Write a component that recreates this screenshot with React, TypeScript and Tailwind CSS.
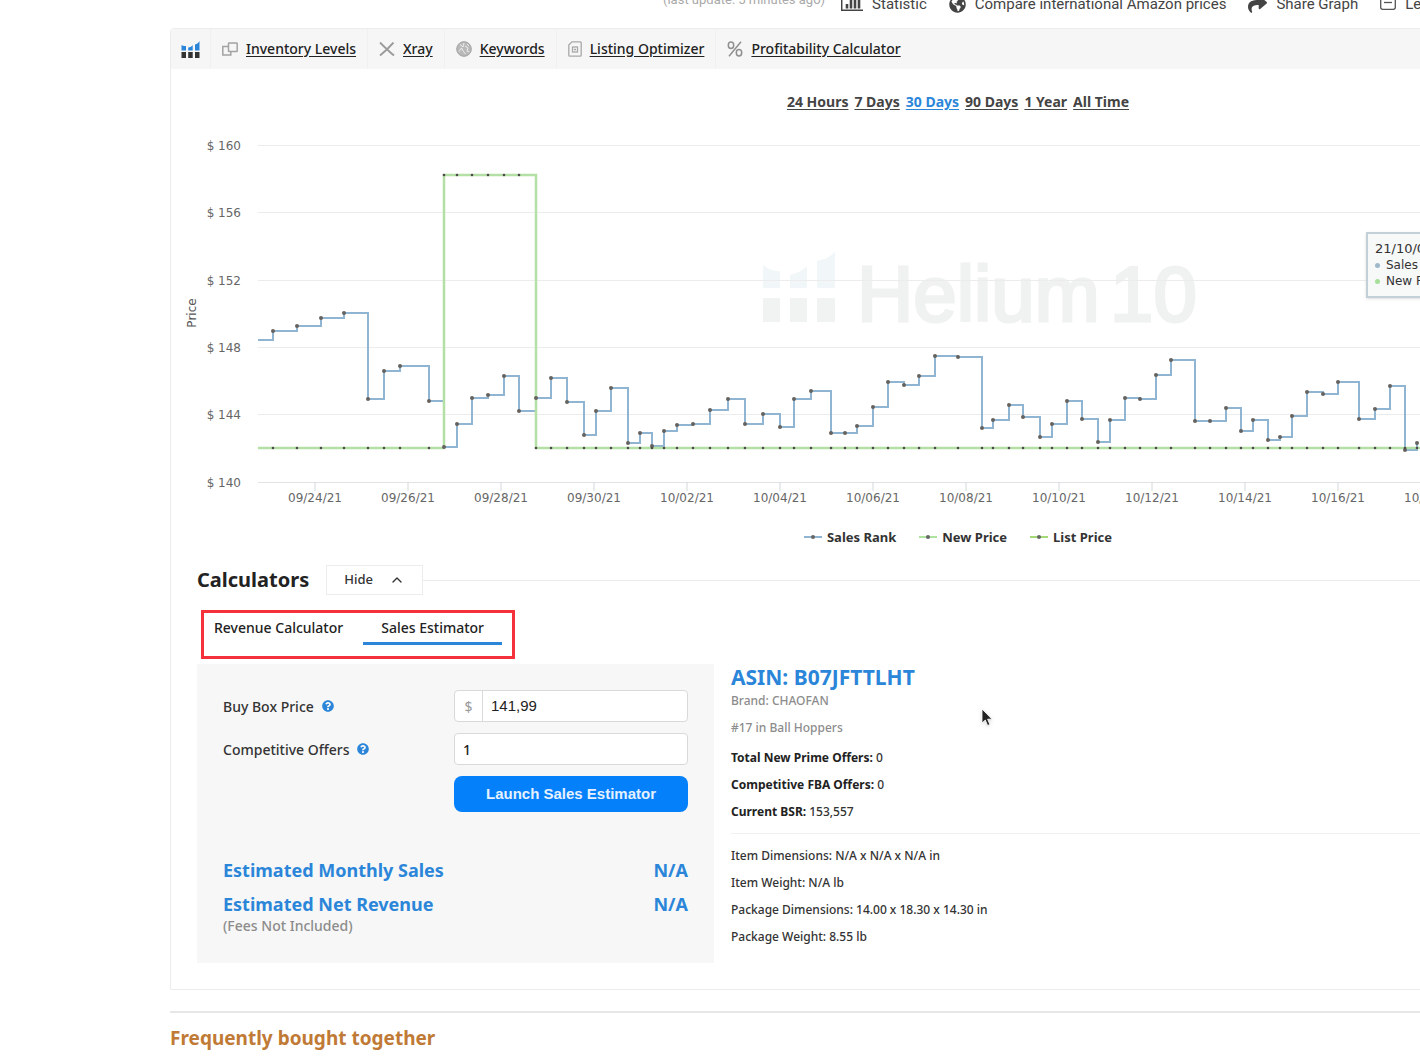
import type { ReactNode } from "react";
import { ChevronUp } from "lucide-react";
import { FaShare, FaGlobeAmericas, FaQuestionCircle } from "react-icons/fa";

type Point = [number, number];

const salesRank: Point[] = [
  [258, 340], [273, 331], [297, 326], [321, 318], [344, 313], [368, 399], [384, 371], [400, 366],
  [429, 401], [444, 447], [457, 424], [472, 398], [488, 395], [504, 376], [519, 411], [536, 398],
  [551, 378], [567, 402], [584, 435], [596, 411], [611, 388], [628, 443], [640, 433], [652, 446],
  [664, 431], [677, 425], [693, 424], [710, 410], [728, 399], [745, 424], [763, 414], [780, 427],
  [794, 399], [811, 391], [831, 433], [845, 433], [857, 426], [873, 407], [888, 382], [904, 385],
  [919, 376], [935, 356], [958, 357], [982, 428], [993, 420], [1009, 405], [1023, 417], [1040, 437],
  [1052, 424], [1067, 401], [1082, 419], [1098, 442], [1110, 420], [1125, 398], [1140, 399],
  [1156, 375], [1171, 360], [1195, 421], [1210, 421], [1226, 408], [1241, 431], [1253, 420],
  [1268, 440], [1280, 437], [1292, 416], [1307, 392], [1323, 394], [1338, 382], [1359, 419],
  [1375, 409], [1390, 386], [1405, 450], [1417, 443],
];

const gridLines = [
  { y: 145, label: "$ 160" },
  { y: 212, label: "$ 156" },
  { y: 280, label: "$ 152" },
  { y: 347, label: "$ 148" },
  { y: 414, label: "$ 144" },
  { y: 482, label: "$ 140" },
];

const dates = [
  "09/24/21", "09/26/21", "09/28/21", "09/30/21", "10/02/21", "10/04/21", "10/06/21",
  "10/08/21", "10/10/21", "10/12/21", "10/14/21", "10/16/21", "10/18/21",
];

const PEAK_START = 444;
const PEAK_END = 536;
const NEW_PRICE_Y = 448;
const NEW_PRICE_PEAK_Y = 175;

function stepPath(points: Point[]) {
  return points.map(([x, y], i) => (i === 0 ? `M${x} ${y}` : `H${x}V${y}`)).join("");
}

function newPriceY(x: number) {
  return x >= PEAK_START && x < PEAK_END ? NEW_PRICE_PEAK_Y : NEW_PRICE_Y;
}

function HeliumMark({ top, bottom, className }: { top: string; bottom: string; className?: string }) {
  return (
    <svg viewBox="0 0 18 17" className={className} aria-hidden="true">
      <path fill={top} d="M0 4c1.200.9 2.800 1.100 4.500 1v4.500H0zM6.700 6.500c2-.2 3.500-1 4.500-2.500v5.500H6.700zM13.500 3.500C15.500 3 17 2 18 0v9.500h-4.500z" />
      <path fill={bottom} d="M0 11h4.500v6H0zM6.700 11h4.500v6H6.700zM13.500 11H18v6h-4.500z" />
    </svg>
  );
}

function WindowsIcon() {
  return (
    <svg viewBox="0 0 16 14" className="h-3.5 w-4" fill="none" stroke="#a3a3a3" strokeWidth="1.500" aria-hidden="true">
      <path d="M6.500 4.500H.8v8.500h8v-3" />
      <rect x="6.500" y="1" width="8.700" height="8.500" rx=".6" />
    </svg>
  );
}

function CrossIcon() {
  return (
    <svg viewBox="0 0 16 14" className="h-3.5 w-4" fill="none" stroke="#9b9b9b" strokeWidth="1.900" aria-hidden="true">
      <path d="M1 .5c4 4 9 9 14 13M14.500.5C10.500 5 6 9.500 1 13.500" />
    </svg>
  );
}

function KeywordsIcon() {
  return (
    <svg viewBox="0 0 16 16" className="size-4" fill="none" aria-hidden="true">
      <circle cx="8" cy="8" r="7.500" fill="#b9b9b9" />
      <path d="M3 10.500 5.500 7l2 3.500L9.500 13M4 3.500l3 2.500 1-4M9 5l3 2-1 3 2.500 1M11 3l2 2" stroke="#f2f2f2" strokeWidth=".9" />
      <circle cx="8" cy="8" r="7.300" stroke="#a0a0a0" strokeWidth=".9" />
    </svg>
  );
}

function ListingIcon() {
  return (
    <svg viewBox="0 0 14 16" className="h-4 w-3.5" fill="none" stroke="#a8a8a8" strokeWidth="1.300" aria-hidden="true">
      <path d="M4 .8h8.200a1 1 0 0 1 1 1v12.400a1 1 0 0 1-1 1H1.800a1 1 0 0 1-1-1V4z" />
      <rect x="4.500" y="6" width="5" height="5" />
      <path d="M6 8.500h2" />
    </svg>
  );
}

function PercentIcon() {
  return (
    <svg viewBox="0 0 16 16" className="size-4" fill="none" stroke="#8f8f8f" strokeWidth="1.500" aria-hidden="true">
      <path d="M14 .8 2 15.200" />
      <ellipse cx="4" cy="4.300" rx="2.700" ry="3.200" />
      <ellipse cx="12" cy="11.700" rx="2.700" ry="3.200" />
    </svg>
  );
}

function StatisticIcon() {
  return (
    <svg viewBox="0 0 22 18" className="h-[18px] w-[22px]" fill="none" stroke="#444" aria-hidden="true">
      <path d="M.7 0v15.200H22" strokeWidth="1.500" />
      <path d="M6 9v4.500M10 4v9.500M14 2v11.500M18 1v12.500" strokeWidth="2.600" />
    </svg>
  );
}

function LegendToggleIcon() {
  return (
    <svg viewBox="0 0 16 16" className="size-4" fill="none" stroke="#555" strokeWidth="1.300" aria-hidden="true">
      <path d="M.7.7v10.600a2 2 0 0 0 2 2h10.600a2 2 0 0 0 2-2V.7z" />
      <path d="M4 6.500h8" />
    </svg>
  );
}

function TopAction({ icon, children }: { icon: ReactNode; children: ReactNode }) {
  return (
    <button type="button" className="flex shrink-0 items-center gap-[9px] whitespace-nowrap">
      {icon}
      {children}
    </button>
  );
}

function Tool({ icon, label }: { icon: ReactNode; label: string }) {
  return (
    <li className="flex items-center gap-2 border-l border-[#f0f0f0] px-[11px]">
      {icon}
      <a href="#" className="pb-0.5 text-[14px] font-medium text-[#222] underline underline-offset-2">{label}</a>
    </li>
  );
}

function PriceChart() {
  return (
    <div className="relative">
      <svg className="block h-[384px] w-full" role="img" aria-label="Price and sales rank, last 30 days">
        <g transform="translate(-171 -128)">
          <g fontFamily='"Liberation Sans", sans-serif' fontSize="78" fill="#f0f1f1" stroke="#f0f1f1" strokeWidth="3">
            <text x="857" y="321">Helium</text>
            <text x="1110" y="321">10</text>
          </g>
          <g fill="#f1f2f2">
            <path d="M763 298h17v24h-17zM790 298h17v24h-17zM817 298h18v24h-18z" />
            <path fill="#f1f6f8" d="M763 265c5 4 10 6 17 6v17h-17zM790 275c8-2 13-5 17-9v22h-17zM817 261c9-2 15-5 18-10v37h-18z" />
          </g>
          {gridLines.map(({ y, label }) => (
            <g key={label}>
              <path d={`M258 ${y}.5H1760`} stroke={y === 482 ? "#dfe3e3" : "#ececec"} strokeWidth="1" />
              <text x="241" y={y + 5} textAnchor="end" fontFamily='"DejaVu Sans", sans-serif' fontSize="12" fill="#666">{label}</text>
            </g>
          ))}
          {dates.map((date, i) => (
            <g key={date}>
              <path d={`M${315 + i * 93} 482v9`} stroke="#d4dada" />
              <text x={315 + i * 93} y="502" textAnchor="middle" fontFamily='"DejaVu Sans", sans-serif' fontSize="12" fill="#666">{date}</text>
            </g>
          ))}
          <text x="196" y="313" textAnchor="middle" transform="rotate(-90 196 313)" fontFamily='"DejaVu Sans", sans-serif' fontSize="12" fill="#555">Price</text>
          <path d={stepPath(salesRank)} fill="none" stroke="#8fb5d3" strokeWidth="2" />
          <path d="M258 448H444V175H536V448H1430" fill="none" stroke="#b2e0a5" strokeWidth="2.500" />
          {salesRank.slice(1).map(([x, y]) => (
            <g key={x} fill="#66635f">
              <circle cx={x} cy={y} r="2" />
              <circle cx={x} cy={newPriceY(x)} r="1.300" fill="#4f4a4a" />
            </g>
          ))}
        </g>
      </svg>
      <div className="absolute top-[104px] left-[1195px] w-44 border-2 border-[#c3d0d7] bg-[#f7f8f8]/95 p-[7px] font-['DejaVu_Sans',sans-serif] text-[12px] leading-4 whitespace-nowrap text-[#333] shadow">
        <p className="text-[13px]">21/10/04 08:00</p>
        <p className="flex items-center gap-1.5"><span className="size-[5px] rounded-full bg-[#9db8cb]" />Sales Rank: 153,557</p>
        <p className="flex items-center gap-1.5"><span className="size-[5px] rounded-full bg-[#a5df9a]" />New Price: $141.99</p>
      </div>
    </div>
  );
}

function LegendItem({ color, label }: { color: string; label: string }) {
  return (
    <li className="flex items-center gap-[5px]">
      <svg viewBox="0 0 18 6" className="h-1.5 w-[18px]" aria-hidden="true">
        <path d="M0 3h18" stroke={color} strokeWidth="2" />
        <circle cx="9" cy="3" r="2" fill="#666" />
      </svg>
      {label}
    </li>
  );
}

function FieldLabel({ htmlFor, children }: { htmlFor: string; children: ReactNode }) {
  return (
    <label htmlFor={htmlFor} className="flex items-center gap-2 text-[14px] font-medium text-[#333]">
      {children}
      <FaQuestionCircle className="size-3 text-[#2b86d9]" />
    </label>
  );
}

const ranges = ["24 Hours", "7 Days", "30 Days", "90 Days", "1 Year", "All Time"];

export default function App() {
  return (
    <div className="relative overflow-hidden bg-white pl-[170px] font-['Noto_Sans',sans-serif] text-[#222]">
      <header className="-mr-20 flex h-7 items-start overflow-hidden font-['Roboto',sans-serif] text-[15px] text-[#444]">
        <div className="-mt-2 flex h-6 flex-1 items-center gap-[22px] pl-[493px]">
          <p className="-mt-2 -mr-1.5 shrink-0 text-[13px] text-[#aaa]">(last update: 5 minutes ago)</p>
          <TopAction icon={<StatisticIcon />}>Statistic</TopAction>
          <TopAction icon={<FaGlobeAmericas className="size-[17px]" />}>Compare international Amazon prices</TopAction>
          <TopAction icon={<FaShare className="size-[19px]" />}>Share Graph</TopAction>
          <TopAction icon={<LegendToggleIcon />}>Legend</TopAction>
        </div>
      </header>

      <section className="-mr-[326px] rounded-tl border border-[#ececec]">
        <ul className="flex h-10 items-stretch rounded-tl bg-[#f6f6f6]">
          <li className="flex items-center px-[10px]">
            <HeliumMark top="#2b86d9" bottom="#333" className="h-[17px] w-[19px]" />
          </li>
          <Tool icon={<WindowsIcon />} label="Inventory Levels" />
          <Tool icon={<CrossIcon />} label="Xray" />
          <Tool icon={<KeywordsIcon />} label="Keywords" />
          <Tool icon={<ListingIcon />} label="Listing Optimizer" />
          <Tool icon={<PercentIcon />} label="Profitability Calculator" />
        </ul>

        <nav className="flex justify-center gap-1.5 pt-[23px] pb-4 text-[14px] leading-5 font-bold">
          {ranges.map((range) => (
            <a key={range} href="#" className={range === "30 Days" ? "text-[#2b86d9] underline underline-offset-2" : "text-[#444] underline underline-offset-2"}>
              {range}
            </a>
          ))}
        </nav>

        <PriceChart />

        <ul className="flex justify-center gap-[23px] pt-[15px] text-[13px] leading-5 font-bold text-[#333]">
          <LegendItem color="#8fb5d3" label="Sales Rank" />
          <LegendItem color="#aee29f" label="New Price" />
          <LegendItem color="#a3d977" label="List Price" />
        </ul>

        <div className="px-[26px] pt-[18px] pb-[26px]">
          <div className="flex items-center">
            <h2 className="text-[20px] leading-7 font-bold text-[#222]">Calculators</h2>
            <button type="button" className="ml-[17px] flex h-[30px] items-center gap-4 border border-[#ececec] px-[17px] text-[13px] font-medium text-[#333]">
              Hide
              <ChevronUp className="size-4" strokeWidth={2} />
            </button>
            <span className="h-px flex-1 bg-[#ececec]" />
          </div>

          <div role="tablist" className="mt-[15px] ml-1 flex w-fit items-start border-3 border-[#f5323c] px-[10px] pb-[11px] text-[14px] leading-5 font-medium">
            <button type="button" role="tab" aria-selected="false" className="pt-[5px] pr-5 pb-[7px]">Revenue Calculator</button>
            <button type="button" role="tab" aria-selected="true" className="border-b-3 border-[#2b86d9] px-[18px] pt-[5px] pb-1">Sales Estimator</button>
          </div>

          <div className="mt-[5px] flex items-start gap-[17px]">
            <form className="w-[517px] shrink-0 bg-[#f7f7f7] px-[26px] pt-[26px] pb-[27px]" onSubmit={(e) => e.preventDefault()}>
              <div className="grid grid-cols-[1fr_234px] items-center gap-y-[11px]">
                <FieldLabel htmlFor="price">Buy Box Price</FieldLabel>
                <div className="flex h-8 overflow-hidden rounded border border-[#d9d9d9] bg-white text-[14px]">
                  <span className="flex w-7 items-center justify-center border-r border-[#d9d9d9] text-[#999]">$</span>
                  <input id="price" defaultValue="141,99" className="min-w-0 flex-1 px-2 font-['Liberation_Sans',sans-serif] text-[15px] text-[#222]" />
                </div>
                <FieldLabel htmlFor="offers">Competitive Offers</FieldLabel>
                <input id="offers" defaultValue="1" className="h-8 min-w-0 rounded border border-[#d9d9d9] bg-white px-2 text-[14px] font-medium text-[#222]" />
                <button type="submit" className="col-start-2 h-9 rounded-lg bg-[#0580fb] font-['Liberation_Sans',sans-serif] text-[15px] font-bold text-[#e4f1ff]">
                  Launch Sales Estimator
                </button>
              </div>
              <dl className="mt-[46px] grid grid-cols-[1fr_auto] gap-y-[10px] text-[18px] leading-6 font-bold text-[#2b86d9]">
                <dt>Estimated Monthly Sales</dt>
                <dd>N/A</dd>
                <dt>Estimated Net Revenue</dt>
                <dd>N/A</dd>
              </dl>
              <p className="text-[14px] leading-5 font-medium text-[#8c8c8c]">(Fees Not Included)</p>
            </form>

            <div className="min-w-0 flex-1 text-[12px] leading-[27px] font-medium text-[#333]">
              <h3 className="text-[21px] leading-[26px] font-bold text-[#2b86d9]">ASIN: B07JFTTLHT</h3>
              <p className="mt-px leading-5 text-[#8c8c8c]">Brand: CHAOFAN</p>
              <p className="my-[3px] text-[#8c8c8c]">#17 in Ball Hoppers</p>
              <p><b className="text-[#222]">Total New Prime Offers:</b> 0</p>
              <p><b className="text-[#222]">Competitive FBA Offers:</b> 0</p>
              <p><b className="text-[#222]">Current BSR:</b> 153,557</p>
              <hr className="my-2 border-[#f0f0f0]" />
              <p>Item Dimensions: N/A x N/A x N/A in</p>
              <p>Item Weight: N/A lb</p>
              <p>Package Dimensions: 14.00 x 18.30 x 14.30 in</p>
              <p>Package Weight: 8.55 lb</p>
            </div>
          </div>
        </div>
      </section>

      <section className="mt-[21px] border-t-2 border-[#e7e7e7] pt-[7px]">
        <h2 className="text-[19px] leading-9 font-bold text-[#c07a35]">Frequently bought together</h2>
      </section>

      <svg viewBox="0 0 12 20" className="pointer-events-none absolute top-[708px] left-[981px] h-5 w-3 drop-shadow" aria-hidden="true">
        <path d="M1 1v14l3.300-3 2.300 5.500 2.300-1-2.300-5.300H11z" fill="#222" stroke="#fff" strokeWidth=".8" />
      </svg>
    </div>
  );
}
